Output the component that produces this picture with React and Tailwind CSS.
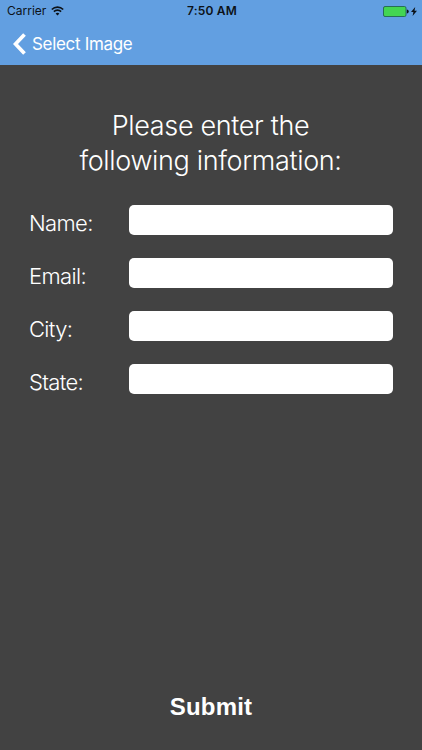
const fields = [
  { id: 'name', label: 'Name:' },
  { id: 'email', label: 'Email:' },
  { id: 'city', label: 'City:' },
  { id: 'state', label: 'State:' },
]

const StatusBar = () => (
  <div className="grid h-[22px] grid-cols-3 items-center pl-[7px] pr-[5px] text-[12px] text-[#0c1218]">
    <div className="flex items-center gap-[5px]">
      <span>Carrier</span>
      <svg width="13" height="10" viewBox="0 0 13 10" fill="none" stroke="currentColor" strokeWidth="1.7">
        <path d="M0.8 3.5a8.1 8.1 0 0 1 11.4 0" />
        <path d="M2.9 5.7a5.1 5.1 0 0 1 7.2 0" />
        <path d="M6.5 9.6L4.6 7.6a2.7 2.7 0 0 1 3.8 0z" fill="currentColor" stroke="none" />
      </svg>
    </div>
    <span className="text-center font-semibold tracking-[0.2px]">7:50 AM</span>
    <div className="flex items-center justify-end gap-[2px]">
      <svg width="26" height="11" viewBox="0 0 26 11">
        <rect x="0.5" y="0.5" width="22.5" height="10" rx="1.5" fill="#43d551" stroke="#1d5a45" strokeWidth="0.8" />
        <path d="M23.8 3.6a1.9 1.9 0 0 1 0 3.8z" fill="currentColor" />
      </svg>
      <svg width="6" height="9" viewBox="0 0 6 9" fill="currentColor">
        <path d="M4.2 0L0 5.1h2.4L1.6 9L6 3.7H3.5z" />
      </svg>
    </div>
  </div>
)

export default function App() {
  return (
    <div className="flex h-[750px] w-[422px] flex-col bg-[#424242] font-[Inter,sans-serif] text-white">
      <header className="h-[65px] bg-[#629fe1]">
        <StatusBar />
        <button className="flex h-[43px] items-center gap-[6px] pl-[13px]">
          <svg width="13" height="22" viewBox="0 0 13 22" fill="none" stroke="currentColor" strokeWidth="3.7">
            <path d="M11.5 1.4L2.5 11l9 9.6" />
          </svg>
          <span className="pt-[2px] text-[17px] tracking-[-0.32px]">Select Image</span>
        </button>
      </header>
      <main className="flex flex-1 flex-col items-center pt-[44px]">
        <h1 className="pr-px text-center text-[27px] font-light leading-[34.5px] tracking-[-0.35px]">
          Please enter the
          <br />
          following information:
        </h1>
        <form className="mt-[27px] flex w-full flex-col gap-[23px] pl-[29px] pr-[29px]">
          {fields.map(({ id, label }) => (
            <div key={id} className="flex h-[30px]">
              <label
                htmlFor={id}
                className="w-[99.5px] pt-[3px] text-[22px] font-light leading-[30px] tracking-[-0.65px]"
              >
                {label}
              </label>
              <input id={id} className="h-[30px] min-w-0 flex-1 rounded-[5px] bg-white px-2 text-black outline-none" />
            </div>
          ))}
        </form>
        <button className="mt-auto mb-[28px] font-['Liberation_Sans',sans-serif] text-[24px] font-bold leading-[30px] tracking-[0.2px]">
          Submit
        </button>
      </main>
    </div>
  )
}
